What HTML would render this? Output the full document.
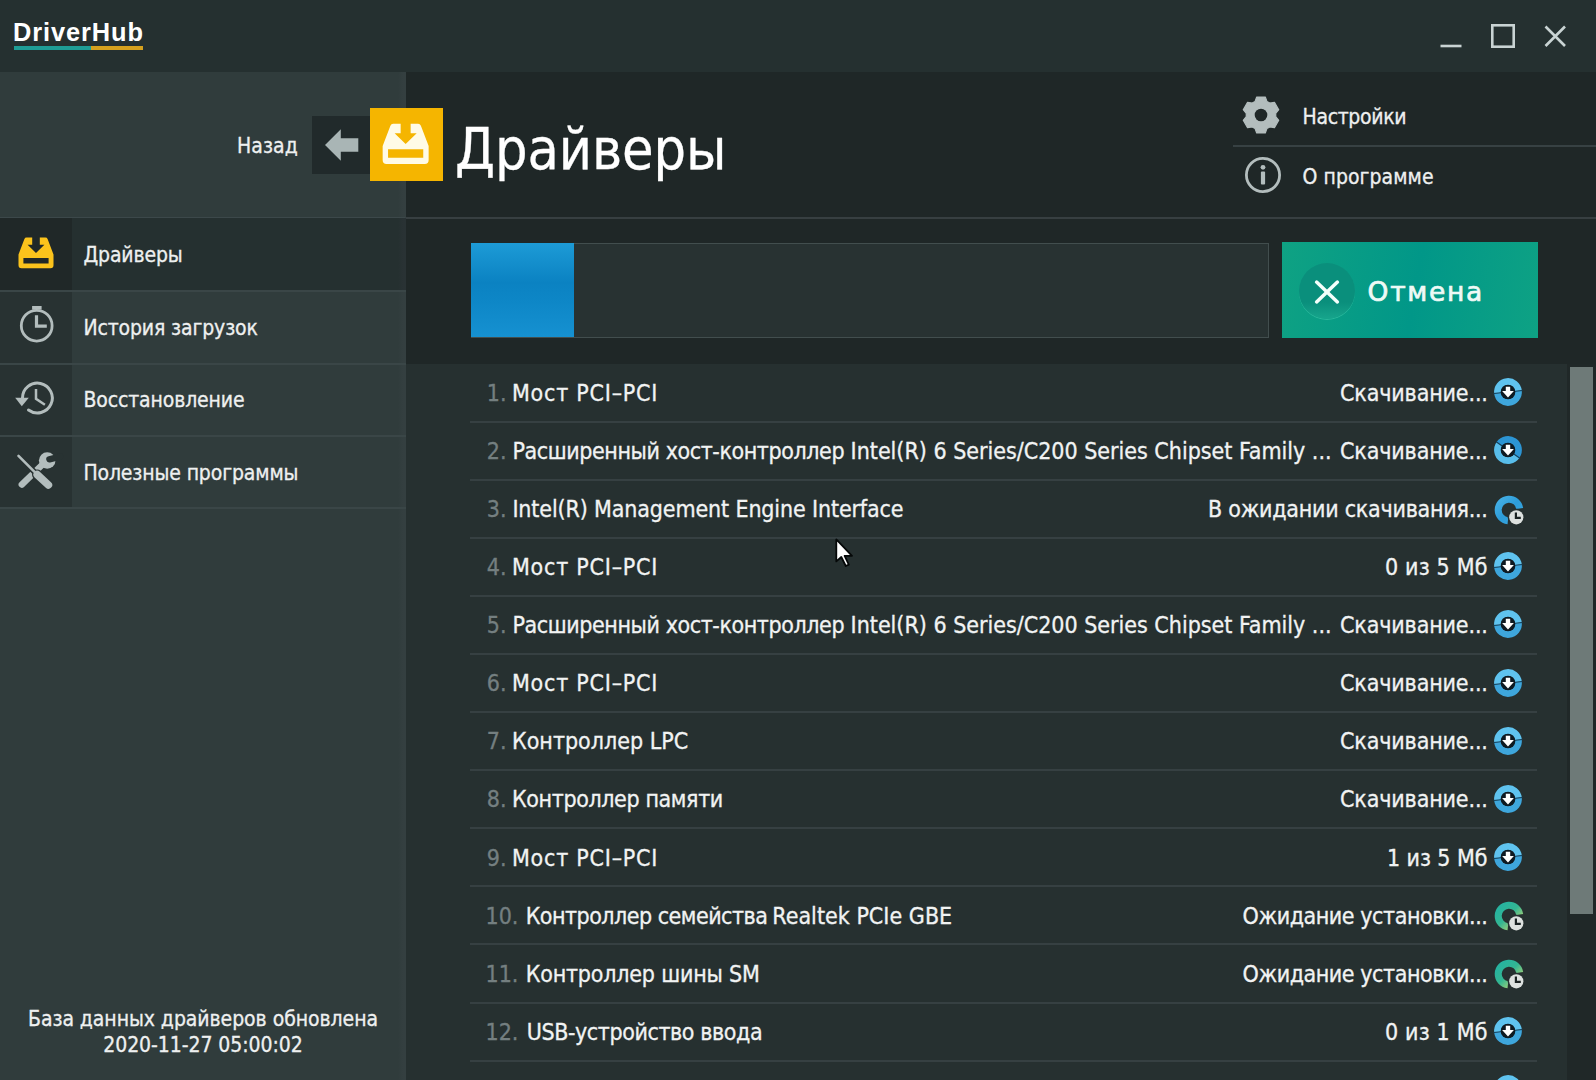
<!DOCTYPE html>
<html lang="ru">
<head>
<meta charset="utf-8">
<title>DriverHub</title>
<style>
html,body{margin:0;padding:0;}
body{width:1596px;height:1080px;overflow:hidden;position:relative;background:#263030;color:#f1f3f3;
  font-family:"DejaVu Sans Condensed","Liberation Sans",sans-serif;font-size:23px;-webkit-text-stroke:0.3px;}
.abs{position:absolute;}
.t{position:absolute;white-space:nowrap;line-height:1;}
/* title bar */
#titlebar{left:0;top:0;width:1596px;height:72px;background:#253030;}
#logo{-webkit-text-stroke:0;left:13px;top:19.8px;font-family:"Liberation Sans",sans-serif;font-weight:bold;font-size:25.4px;color:#fff;letter-spacing:0.9px;}
/* sidebar */
#sidebar{left:0;top:72px;width:405.6px;height:1008px;background:linear-gradient(90deg,#303c3c 398px,#343f40 403px);}
#main{left:405.6px;top:72px;width:1190.4px;height:292.3px;background:#1f2727;}
#hdrline{left:0;top:216.8px;width:1596px;height:2.1px;background:linear-gradient(90deg,#3c484a 405px,#373f41 406px);}
.nav{left:0;width:405.6px;height:72px;}
.nav .ic{position:absolute;left:0;top:0;width:72.2px;height:100%;background:#283232;}
.nav.active{background:linear-gradient(90deg,#253030 398px,#293234 403px);}
.nav.active .ic{background:#202828;}
.nav .lbl{position:absolute;left:83.4px;top:27px;line-height:1;white-space:nowrap;font-size:21px;letter-spacing:-0.13px;color:#eef0f0;}
.sep{position:absolute;left:0;width:405.6px;height:2px;background:#3a4647;}
/* list */
#list{left:405.6px;top:364.3px;width:1190.4px;height:716px;background:#263030;}
.row{position:absolute;left:470px;width:1067px;height:56.6px;border-bottom:2px solid #364042;line-height:57px;white-space:nowrap;}
.row span{position:absolute;top:17.8px;line-height:1;}
.row .n{color:#747f80;}
.row svg{position:absolute;left:1023.2px;top:13px;}
.row svg.w{left:1022.8px;top:13.4px;}
</style>
</head>
<body>
<div id="titlebar" class="abs"></div>
<div id="logo" class="t">DriverHub</div>
<div class="abs" style="left:14px;top:45.9px;width:77px;height:4px;background:#1f9d96;"></div>
<div class="abs" style="left:91px;top:45.9px;width:51.5px;height:4px;background:#d6a11e;"></div>
<!-- window controls -->
<svg class="abs" style="left:1430px;top:14px" width="150" height="44" viewBox="0 0 150 44" fill="none" stroke="#c9d3d3" stroke-width="2.6">
  <path d="M10.5 32H31.5"/>
  <rect x="62.3" y="11.3" width="21.4" height="21.4"/>
  <path d="M115.5 12.5L135 32M135 12.5L115.5 32"/>
</svg>

<div id="sidebar" class="abs"></div>
<div id="main" class="abs"></div>
<div id="list" class="abs"></div>
<div id="hdrline" class="abs"></div>

<!-- header -->
<div class="t" id="back" style="left:237px;top:136.4px;font-size:21px;letter-spacing:0.07px;color:#eef0f0;">Назад</div>
<div class="abs" style="left:312px;top:116px;width:60px;height:57.5px;background:#212a2b;"></div>
<svg class="abs" style="left:300px;top:100px" width="80" height="90" viewBox="300 100 80 90"><path d="M325 145L340.8 129.2V138.3H358.3V151.7H340.8V160.8Z" fill="#a9b5b5"/></svg>
<div class="abs" style="left:369.5px;top:108.3px;width:73px;height:73px;background:#f5b500;"></div>
<svg class="abs" style="left:382.3px;top:123.2px" width="47.3" height="42.05" viewBox="0 0 36 32"><path fill="#fffbe6" fill-rule="evenodd" d="M8.5 0.6H14.2V7.8H9.6L18 16L26.4 7.8H21.8V0.6H27.5Q29 0.6 29.6 2L35.5 17.5V28.2Q35.5 31.2 32.5 31.2H3.5Q0.5 31.2 0.5 28.2V17.5L6.4 2Q7 0.6 8.5 0.6ZM4.6 19.9H31.4V26.4H4.6Z"/></svg>
<div class="t" id="title" style="left:455px;top:121.3px;font-size:57px;letter-spacing:-0.1px;color:#fff;">Драйверы</div>

<!-- settings / about -->
<svg class="abs" style="left:1241.2px;top:95.2px" width="40" height="40" viewBox="-20 -20 40 40">
  <path d="M-5.90 -13.60L-4.30 -18.00L4.30 -18.00L5.90 -13.60L8.83 -11.91L13.44 -12.72L17.74 -5.28L14.73 -1.69L14.73 1.69L17.74 5.28L13.44 12.72L8.83 11.91L5.90 13.60L4.30 18.00L-4.30 18.00L-5.90 13.60L-8.83 11.91L-13.44 12.72L-17.74 5.28L-14.73 1.69L-14.73 -1.69L-17.74 -5.28L-13.44 -12.72L-8.83 -11.91Z" fill="#b3bdbd" stroke="#b3bdbd" stroke-width="1.2" stroke-linejoin="round"/>
  <circle r="6.3" fill="#1f2727"/>
</svg>
<div class="t" style="left:1302.5px;top:106.6px;font-size:21px;letter-spacing:-0.33px;color:#eef0f0;">Настройки</div>
<div class="abs" style="left:1233px;top:145.3px;width:363px;height:2px;background:#374143;"></div>
<svg class="abs" style="left:1242.8px;top:155.2px" width="40" height="40" viewBox="-20 -20 40 40">
  <circle r="16.6" fill="none" stroke="#b3bdbd" stroke-width="2.8"/>
  <circle cy="-7.7" r="2.4" fill="#b3bdbd"/><rect x="-2.1" y="-3.6" width="4.2" height="13.2" rx="1" fill="#b3bdbd"/>
</svg>
<div class="t" style="left:1302.5px;top:167.4px;font-size:21px;letter-spacing:0.06px;color:#eef0f0;">О программе</div>

<!-- nav -->
<div class="abs nav active" style="top:218px;height:72.5px"><div class="ic"></div><div class="lbl">Драйверы</div></div>
<div class="abs nav" style="top:290.5px;height:72.5px"><div class="ic"></div><div class="lbl">История загрузок</div></div>
<div class="abs nav" style="top:363px;height:72.5px"><div class="ic"></div><div class="lbl">Восстановление</div></div>
<div class="abs nav" style="top:435.5px;height:72px"><div class="ic"></div><div class="lbl">Полезные программы</div></div>
<div class="sep" style="top:290px"></div><div class="sep" style="top:362.5px"></div><div class="sep" style="top:435px"></div><div class="sep" style="top:507px"></div>

<!-- nav icons -->
<svg class="abs" style="left:18px;top:237px" width="36" height="32" viewBox="0 0 36 32"><path fill="#fbc31c" fill-rule="evenodd" d="M8.5 0.6H14.2V7.8H9.6L18 16L26.4 7.8H21.8V0.6H27.5Q29 0.6 29.6 2L35.5 17.5V28.2Q35.5 31.2 32.5 31.2H3.5Q0.5 31.2 0.5 28.2V17.5L6.4 2Q7 0.6 8.5 0.6ZM5.4 20.9H30.6V26.4H5.4Z"/></svg>
<svg class="abs" style="left:6px;top:296px" width="60" height="60" viewBox="0 0 60 60" fill="none" stroke="#b3bdbd"><circle cx="30.7" cy="29.7" r="15.4" stroke-width="2.8"/><path d="M30.5 19.2V30.1H40.8" stroke-width="3.2"/><rect x="26.1" y="10" width="9.5" height="3.6" fill="#b3bdbd" stroke="none"/></svg>
<svg class="abs" style="left:6px;top:370px" width="60" height="60" viewBox="0 0 60 60" fill="none" stroke="#b3bdbd"><path d="M22.5 40A14.9 14.9 0 1 0 16.5 28.05" stroke-width="3" stroke-linecap="round"/><path d="M9.2 27.8H22.8L15.8 36.2Z" fill="#b3bdbd" stroke="none"/><path d="M30 18.9V28.9L38.9 34.7" stroke-width="2.5"/></svg>
<svg class="abs" style="left:6px;top:442px" width="60" height="60" viewBox="0 0 60 60" fill="none"><path d="M15.8 42.6L37 22" stroke="#b3bdbd" stroke-width="6.4" stroke-linecap="round"/><circle cx="41.2" cy="18.5" r="8.3" fill="#b3bdbd"/><path d="M43.4 17.3L54 14.6" stroke="#283232" stroke-width="6.4" stroke-linecap="round"/><path d="M14 15.4L30 31.4" stroke="#283232" stroke-width="5.6"/><path d="M31.2 32.6L42.4 43" stroke="#283232" stroke-width="10.4" stroke-linecap="round"/><path d="M12.5 13.9L30 31.4" stroke="#b3bdbd" stroke-width="2.6" stroke-linecap="round"/><path d="M31.2 32.6L42.4 43" stroke="#b3bdbd" stroke-width="7.6" stroke-linecap="round"/></svg>
<div class="t" style="left:0;width:406px;text-align:center;top:1005.7px;font-size:21px;line-height:26px;letter-spacing:-0.06px;color:#eef0f0;">База данных драйверов обновлена <br>2020-11-27 05:00:02</div>

<!-- toolbar -->
<div class="abs" style="left:470.5px;top:243.3px;width:796px;height:93px;border:1px solid #424e4e;background:#283232;"></div>
<div class="abs" style="left:470.8px;top:243.2px;width:103.2px;height:94.2px;background:linear-gradient(#1d9bd6,#0b82c2 42%,#0d86c6 60%,#1691d1);"></div>
<div class="abs" id="cancel" style="left:1282.1px;top:242.4px;width:256px;height:95.3px;background:linear-gradient(100deg,#0fa283,#019788 52%,#0ea284);"></div>
<div class="abs" style="left:1299.2px;top:263.2px;width:56px;height:56px;border-radius:50%;background:linear-gradient(#0a8f7c 70%,#17a58c);box-shadow:0 1px 0 #2bb89c;"></div>
<svg class="abs" style="left:1313.2px;top:277.6px" width="28" height="28" viewBox="0 0 28 28"><path d="M3.6 4.1L24.4 23.9M24.4 4.1L3.6 23.9" stroke="#f4fffb" stroke-width="3.5" stroke-linecap="round"/></svg>
<div class="t" style="left:1367.6px;top:278.8px;font-family:'DejaVu Sans','Liberation Sans',sans-serif;font-size:26.5px;letter-spacing:1.68px;-webkit-text-stroke:0.7px #eefaf6;color:#eefaf6;">Отмена</div>

<!-- scrollbar -->
<div class="abs" style="left:1567px;top:364.3px;width:29px;height:716px;background:#202828;"></div>
<div class="abs" style="left:1569.7px;top:366.8px;width:23.6px;height:547.2px;background:#6e7a78;"></div>

<!--ROWS-->
<div class="row" style="top:364.0px"><span class="n" style="left:16.8px">1. </span><span class="nm" style="left:42.0px;letter-spacing:0.763px">Мост PCI–PCI</span> <span class="st" style="left:870.0px;letter-spacing:-0.144px">Скачивание...</span> <svg width="30" height="30" viewBox="-15 -15 30 30"><g transform="rotate(-6)" fill="none" stroke-width="6.9"><path d="M-10.45 0A10.45 10.45 0 0 1 10.45 0" stroke="#5fc3ef"/><path d="M10.45 0A10.45 10.45 0 0 1 -10.45 0" stroke="#3ea6dc"/><path d="M-14.5 0H14.5" stroke="#12405c" stroke-width="1.1"/></g><circle r="7.3" fill="#0e1a22"/><path d="M-2.2 -5.2H2.2V-0.9H5.9L0 5.4L-5.9 -0.9H-2.2Z" fill="#fff"/></svg></div>
<div class="row" style="top:422.1px"><span class="n" style="left:16.8px">2. </span><span class="nm" style="left:42.5px;letter-spacing:-0.416px">Расширенный хост-контроллер </span><span class="nm" style="left:380.6px;letter-spacing:-0.007px">Intel(R) 6 Series/C200 Series Chipset Family ...</span> <span class="st" style="left:870.0px;letter-spacing:-0.144px">Скачивание...</span> <svg width="30" height="30" viewBox="-15 -15 30 30"><g transform="rotate(35)" fill="none" stroke-width="6.9"><path d="M-10.45 0A10.45 10.45 0 0 1 10.45 0" stroke="#2c95d4"/><path d="M10.45 0A10.45 10.45 0 0 1 -10.45 0" stroke="#58bdea"/><path d="M-14.5 0H14.5" stroke="#12405c" stroke-width="1.1"/></g><circle r="7.3" fill="#0e1a22"/><path d="M-2.2 -5.2H2.2V-0.9H5.9L0 5.4L-5.9 -0.9H-2.2Z" fill="#fff"/></svg></div>
<div class="row" style="top:480.2px"><span class="n" style="left:16.8px">3. </span><span class="nm" style="left:42.4px;letter-spacing:-0.137px">Intel(R) Management Engine Interface</span> <span class="st" style="left:738.0px;letter-spacing:-0.254px">В ожидании скачивания...</span> <svg class="w" width="32" height="32" viewBox="-16 -16 32 32"><defs><linearGradient id="g2" gradientUnits="userSpaceOnUse" x1="-10" y1="-10" x2="10" y2="10"><stop offset="0" stop-color="#43aee4"/><stop offset="0.5" stop-color="#2d9cd9"/><stop offset="1" stop-color="#3aa6df"/></linearGradient></defs><path d="M-1.1 10.7A10.8 10.8 0 1 1 10.7 -1.5" fill="none" stroke="url(#g2)" stroke-width="7"/><circle cx="7.3" cy="7.3" r="8.6" fill="#263030"/><circle cx="7.3" cy="7.3" r="7.1" fill="#dde1df"/><path d="M6.9 2.6V7.8H11.8" fill="none" stroke="#1a2222" stroke-width="2.2"/></svg></div>
<div class="row" style="top:538.3px"><span class="n" style="left:16.8px">4. </span><span class="nm" style="left:42.0px;letter-spacing:0.763px">Мост PCI–PCI</span> <span class="st" style="left:915.0px;letter-spacing:0.17px">0 из 5 Мб</span> <svg width="30" height="30" viewBox="-15 -15 30 30"><g transform="rotate(-6)" fill="none" stroke-width="6.9"><path d="M-10.45 0A10.45 10.45 0 0 1 10.45 0" stroke="#5fc3ef"/><path d="M10.45 0A10.45 10.45 0 0 1 -10.45 0" stroke="#3ea6dc"/><path d="M-14.5 0H14.5" stroke="#12405c" stroke-width="1.1"/></g><circle r="7.3" fill="#0e1a22"/><path d="M-2.2 -5.2H2.2V-0.9H5.9L0 5.4L-5.9 -0.9H-2.2Z" fill="#fff"/></svg></div>
<div class="row" style="top:596.4px"><span class="n" style="left:16.8px">5. </span><span class="nm" style="left:42.5px;letter-spacing:-0.416px">Расширенный хост-контроллер </span><span class="nm" style="left:380.6px;letter-spacing:-0.007px">Intel(R) 6 Series/C200 Series Chipset Family ...</span> <span class="st" style="left:870.0px;letter-spacing:-0.144px">Скачивание...</span> <svg width="30" height="30" viewBox="-15 -15 30 30"><g transform="rotate(-6)" fill="none" stroke-width="6.9"><path d="M-10.45 0A10.45 10.45 0 0 1 10.45 0" stroke="#5fc3ef"/><path d="M10.45 0A10.45 10.45 0 0 1 -10.45 0" stroke="#3ea6dc"/><path d="M-14.5 0H14.5" stroke="#12405c" stroke-width="1.1"/></g><circle r="7.3" fill="#0e1a22"/><path d="M-2.2 -5.2H2.2V-0.9H5.9L0 5.4L-5.9 -0.9H-2.2Z" fill="#fff"/></svg></div>
<div class="row" style="top:654.5px"><span class="n" style="left:16.8px">6. </span><span class="nm" style="left:42.0px;letter-spacing:0.763px">Мост PCI–PCI</span> <span class="st" style="left:870.0px;letter-spacing:-0.144px">Скачивание...</span> <svg width="30" height="30" viewBox="-15 -15 30 30"><g transform="rotate(-6)" fill="none" stroke-width="6.9"><path d="M-10.45 0A10.45 10.45 0 0 1 10.45 0" stroke="#5fc3ef"/><path d="M10.45 0A10.45 10.45 0 0 1 -10.45 0" stroke="#3ea6dc"/><path d="M-14.5 0H14.5" stroke="#12405c" stroke-width="1.1"/></g><circle r="7.3" fill="#0e1a22"/><path d="M-2.2 -5.2H2.2V-0.9H5.9L0 5.4L-5.9 -0.9H-2.2Z" fill="#fff"/></svg></div>
<div class="row" style="top:712.6px"><span class="n" style="left:16.8px">7. </span><span class="nm" style="left:42.0px;letter-spacing:0.005px">Контроллер LPC</span> <span class="st" style="left:870.0px;letter-spacing:-0.144px">Скачивание...</span> <svg width="30" height="30" viewBox="-15 -15 30 30"><g transform="rotate(-6)" fill="none" stroke-width="6.9"><path d="M-10.45 0A10.45 10.45 0 0 1 10.45 0" stroke="#5fc3ef"/><path d="M10.45 0A10.45 10.45 0 0 1 -10.45 0" stroke="#3ea6dc"/><path d="M-14.5 0H14.5" stroke="#12405c" stroke-width="1.1"/></g><circle r="7.3" fill="#0e1a22"/><path d="M-2.2 -5.2H2.2V-0.9H5.9L0 5.4L-5.9 -0.9H-2.2Z" fill="#fff"/></svg></div>
<div class="row" style="top:770.7px"><span class="n" style="left:16.8px">8. </span><span class="nm" style="left:42.0px;letter-spacing:-0.384px">Контроллер памяти</span> <span class="st" style="left:870.0px;letter-spacing:-0.144px">Скачивание...</span> <svg width="30" height="30" viewBox="-15 -15 30 30"><g transform="rotate(-6)" fill="none" stroke-width="6.9"><path d="M-10.45 0A10.45 10.45 0 0 1 10.45 0" stroke="#5fc3ef"/><path d="M10.45 0A10.45 10.45 0 0 1 -10.45 0" stroke="#3ea6dc"/><path d="M-14.5 0H14.5" stroke="#12405c" stroke-width="1.1"/></g><circle r="7.3" fill="#0e1a22"/><path d="M-2.2 -5.2H2.2V-0.9H5.9L0 5.4L-5.9 -0.9H-2.2Z" fill="#fff"/></svg></div>
<div class="row" style="top:828.8px"><span class="n" style="left:16.8px">9. </span><span class="nm" style="left:42.0px;letter-spacing:0.763px">Мост PCI–PCI</span> <span class="st" style="left:917.0px;letter-spacing:-0.08px">1 из 5 Мб</span> <svg width="30" height="30" viewBox="-15 -15 30 30"><g transform="rotate(-6)" fill="none" stroke-width="6.9"><path d="M-10.45 0A10.45 10.45 0 0 1 10.45 0" stroke="#5fc3ef"/><path d="M10.45 0A10.45 10.45 0 0 1 -10.45 0" stroke="#3ea6dc"/><path d="M-14.5 0H14.5" stroke="#12405c" stroke-width="1.1"/></g><circle r="7.3" fill="#0e1a22"/><path d="M-2.2 -5.2H2.2V-0.9H5.9L0 5.4L-5.9 -0.9H-2.2Z" fill="#fff"/></svg></div>
<div class="row" style="top:886.9px"><span class="n" style="left:15.5px">10. </span><span class="nm" style="left:55.7px;letter-spacing:-0.508px">Контроллер семейства </span><span class="nm" style="left:302.3px;letter-spacing:0.022px">Realtek PCIe GBE</span> <span class="st" style="left:772.6px;letter-spacing:-0.438px">Ожидание установки...</span> <svg class="w" width="32" height="32" viewBox="-16 -16 32 32"><defs><linearGradient id="g9" gradientUnits="userSpaceOnUse" x1="-9" y1="-9" x2="10" y2="10"><stop offset="0" stop-color="#27b39f"/><stop offset="0.45" stop-color="#33b692"/><stop offset="0.8" stop-color="#8fcc7c"/><stop offset="1" stop-color="#a8d68a"/></linearGradient></defs><path d="M-1.1 10.7A10.8 10.8 0 1 1 10.7 -1.5" fill="none" stroke="url(#g9)" stroke-width="7"/><circle cx="7.3" cy="7.3" r="8.6" fill="#263030"/><circle cx="7.3" cy="7.3" r="7.1" fill="#dde1df"/><path d="M6.9 2.6V7.8H11.8" fill="none" stroke="#1a2222" stroke-width="2.2"/></svg></div>
<div class="row" style="top:945.0px"><span class="n" style="left:15.5px">11. </span><span class="nm" style="left:55.7px;letter-spacing:-0.193px">Контроллер шины SM</span> <span class="st" style="left:772.6px;letter-spacing:-0.438px">Ожидание установки...</span> <svg class="w" width="32" height="32" viewBox="-16 -16 32 32"><defs><linearGradient id="g10" gradientUnits="userSpaceOnUse" x1="-9" y1="-9" x2="10" y2="10"><stop offset="0" stop-color="#27b39f"/><stop offset="0.45" stop-color="#33b692"/><stop offset="0.8" stop-color="#8fcc7c"/><stop offset="1" stop-color="#a8d68a"/></linearGradient></defs><path d="M-1.1 10.7A10.8 10.8 0 1 1 10.7 -1.5" fill="none" stroke="url(#g10)" stroke-width="7"/><circle cx="7.3" cy="7.3" r="8.6" fill="#263030"/><circle cx="7.3" cy="7.3" r="7.1" fill="#dde1df"/><path d="M6.9 2.6V7.8H11.8" fill="none" stroke="#1a2222" stroke-width="2.2"/></svg></div>
<div class="row" style="top:1003.1px"><span class="n" style="left:15.5px">12. </span><span class="nm" style="left:56.7px;letter-spacing:-0.409px">USB-устройство ввода</span> <span class="st" style="left:915.0px;letter-spacing:0.17px">0 из 1 Мб</span> <svg width="30" height="30" viewBox="-15 -15 30 30"><g transform="rotate(-6)" fill="none" stroke-width="6.9"><path d="M-10.45 0A10.45 10.45 0 0 1 10.45 0" stroke="#5fc3ef"/><path d="M10.45 0A10.45 10.45 0 0 1 -10.45 0" stroke="#3ea6dc"/><path d="M-14.5 0H14.5" stroke="#12405c" stroke-width="1.1"/></g><circle r="7.3" fill="#0e1a22"/><path d="M-2.2 -5.2H2.2V-0.9H5.9L0 5.4L-5.9 -0.9H-2.2Z" fill="#fff"/></svg></div>
<div class="row" style="top:1061.2px;border:none"><svg width="30" height="30" viewBox="-15 -15 30 30"><g transform="rotate(-6)" fill="none" stroke-width="6.9"><path d="M-10.45 0A10.45 10.45 0 0 1 10.45 0" stroke="#5fc3ef"/><path d="M10.45 0A10.45 10.45 0 0 1 -10.45 0" stroke="#3ea6dc"/><path d="M-14.5 0H14.5" stroke="#12405c" stroke-width="1.1"/></g><circle r="7.3" fill="#0e1a22"/><path d="M-2.2 -5.2H2.2V-0.9H5.9L0 5.4L-5.9 -0.9H-2.2Z" fill="#fff"/></svg></div>
<!--/ROWS-->
<svg id="cursor" class="abs" style="left:820px;top:530px" width="50" height="45" viewBox="820 530 50 45"><path d="M836.3 539.4V561.4L841.3 557L845.8 566L848.8 564.6L844.6 555.8H852Z" fill="#fff" stroke="#050808" stroke-width="1.8" stroke-linejoin="round"/></svg>
</body>
</html>
